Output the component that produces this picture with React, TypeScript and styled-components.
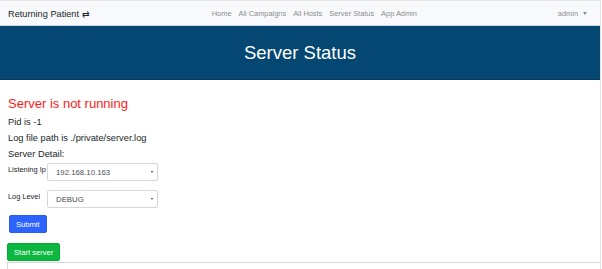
import React from 'react'
import { createGlobalStyle, styled } from 'styled-components'

const GlobalStyle = createGlobalStyle`
  html, body {
    margin: 0;
    padding: 0;
    background: #ffffff;
  }
  body {
    font-family: 'Liberation Sans', Arial, sans-serif;
    color: #212529;
    overflow: hidden;
  }
`

const Page = styled.div`
  width: 600px;
  height: 269px;
  overflow: hidden;
  border-right: 1px solid #e4e4e4;
  display: flex;
  flex-flow: column nowrap;
`

const NavBar = styled.nav`
  height: 26px;
  flex-shrink: 0;
  background: #f8f9fa;
  border-top: 1px solid #e6e6e6;
  border-bottom: 1px solid #c9d3dc;
  box-sizing: border-box;
  display: flex;
  align-items: center;
  padding: 0 13px 0 8px;
`

const Brand = styled.a`
  font-size: 9.2px;
  color: #212529;
  white-space: nowrap;
  margin-right: auto;
`

const NavLinks = styled.div`
  display: flex;
  gap: 7px;
  margin-right: 141px;
`

const NavLink = styled.a`
  font-size: 7.4px;
  color: #8a8d90;
  white-space: nowrap;
`

const UserMenu = styled.a`
  font-size: 7.4px;
  color: #8a8d90;
  display: flex;
  align-items: center;
  gap: 5px;
`

const Caret = styled.span`
  width: 0;
  height: 0;
  border-left: 2.5px solid transparent;
  border-right: 2.5px solid transparent;
  border-top: 3px solid #8a8d90;
`

const Banner = styled.header`
  height: 54px;
  flex-shrink: 0;
  background: #034772;
  border-bottom: 1px solid #063a5b;
  box-sizing: border-box;
  display: flex;
  align-items: center;
  justify-content: center;
`

const BannerTitle = styled.h1`
  margin: 0;
  font-weight: 400;
  font-size: 18.5px;
  color: #ffffff;
`

const Content = styled.main`
  padding: 16px 0 0 7px;
  display: flex;
  flex-flow: column nowrap;
`

const StatusLine = styled.h4`
  margin: 0 0 2px 1px;
  font-weight: 400;
  font-size: 13px;
  line-height: 16px;
  color: #ff1a1a;
`

const InfoLine = styled.p`
  margin: 0 0 0 1px;
  font-size: 9.3px;
  line-height: 16px;
`

const FormRow = styled.div<{ $gap: number }>`
  display: flex;
  align-items: flex-start;
  margin-top: ${({ $gap }) => $gap}px;
`

const FieldLabel = styled.label`
  width: 39px;
  margin-left: 1px;
  font-size: 7.4px;
  line-height: 10px;
  padding-top: 2px;
  white-space: nowrap;
`

const SelectBox = styled.div`
  width: 111px;
  height: 18px;
  box-sizing: border-box;
  border: 1px solid #d4d8dc;
  border-radius: 2px;
  background: #ffffff;
  display: flex;
  align-items: center;
  justify-content: space-between;
  padding: 0 4px 0 8px;
  font-size: 7.8px;
  color: #495057;
`

const SelectArrow = styled.span`
  width: 0;
  height: 0;
  border-left: 1.5px solid transparent;
  border-right: 1.5px solid transparent;
  border-top: 2.5px solid #333;
`

const Button = styled.button<{ $tone: 'blue' | 'green' }>`
  align-self: flex-start;
  border: 1px solid ${({ $tone }) => ($tone === 'blue' ? '#2a5eea' : '#0aa83a')};
  background: ${({ $tone }) => ($tone === 'blue' ? '#2c62fd' : '#0cb73f')};
  color: #ffffff;
  border-radius: 2px;
  font-family: 'Liberation Sans', Arial, sans-serif;
  font-size: 7.6px;
  height: 18px;
  padding: 0 6px;
  cursor: pointer;
`

const SubmitButton = styled(Button)`
  margin: 7px 0 0 2px;
`

const StartButton = styled(Button)`
  margin-top: 10px;
`

const LogArea = styled.textarea`
  width: 600px;
  height: 40px;
  flex-shrink: 0;
  margin: 1px 0 0 0;
  box-sizing: border-box;
  border: 1px solid #d8d8d8;
  resize: none;
`

export default function App() {
  return (
    <>
      <GlobalStyle />
      <Page>
        <NavBar>
          <Brand>Returning Patient ⇄</Brand>
          <NavLinks>
            <NavLink>Home</NavLink>
            <NavLink>All Campaigns</NavLink>
            <NavLink>All Hosts</NavLink>
            <NavLink>Server Status</NavLink>
            <NavLink>App Admin</NavLink>
          </NavLinks>
          <UserMenu>
            admin <Caret />
          </UserMenu>
        </NavBar>
        <Banner>
          <BannerTitle>Server Status</BannerTitle>
        </Banner>
        <Content>
          <StatusLine>Server is not running</StatusLine>
          <InfoLine>Pid is -1</InfoLine>
          <InfoLine>Log file path is ./private/server.log</InfoLine>
          <InfoLine>Server Detail:</InfoLine>
          <FormRow $gap={1}>
            <FieldLabel>Listening Ip</FieldLabel>
            <SelectBox>
              192.168.10.163 <SelectArrow />
            </SelectBox>
          </FormRow>
          <FormRow $gap={9}>
            <FieldLabel>Log Level</FieldLabel>
            <SelectBox>
              DEBUG <SelectArrow />
            </SelectBox>
          </FormRow>
          <SubmitButton $tone="blue">Submit</SubmitButton>
          <StartButton $tone="green">Start server</StartButton>
          <LogArea readOnly />
        </Content>
      </Page>
    </>
  )
}
